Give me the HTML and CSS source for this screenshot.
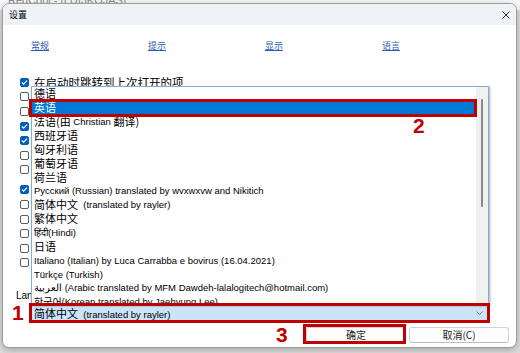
FILE: index.html
```html
<!DOCTYPE html>
<html lang="zh-CN">
<head>
<meta charset="utf-8">
<title>设置</title>
<link rel="stylesheet" href="styles.css">
</head>
<body>
<div class="app-title"><span class="app-title-text">RedCool - [LUI3KOJAS]</span></div>

<div class="dialog">
  <div class="titlebar">
    <span class="title">设置</span>
    <svg class="close" viewBox="0 0 8 8" width="8" height="8"><path d="M0.5 0.5 L7.5 7.5 M7.5 0.5 L0.5 7.5" stroke="#333" stroke-width="1" fill="none"/></svg>
  </div>
  <div class="content">
    <nav class="tabs">
      <a class="tab">常规</a>
      <a class="tab">提示</a>
      <a class="tab">显示</a>
      <a class="tab">语言</a>
    </nav>
    <div class="options">
      <div class="opt"><span class="cb on"><svg viewBox="0 0 9 9" width="9" height="9"><path d="M1.8 4.5 L3.6 6.2 L7.1 2.6" stroke="#fff" stroke-width="1.1" fill="none"/></svg></span><span class="opt-label">在启动时跳转到上次打开的项</span></div>
      <div class="opt"><span class="cb"></span></div>
      <div class="opt"><span class="cb"></span></div>
      <div class="opt"><span class="cb on"><svg viewBox="0 0 9 9" width="9" height="9"><path d="M1.8 4.5 L3.6 6.2 L7.1 2.6" stroke="#fff" stroke-width="1.1" fill="none"/></svg></span></div>
      <div class="opt"><span class="cb on"><svg viewBox="0 0 9 9" width="9" height="9"><path d="M1.8 4.5 L3.6 6.2 L7.1 2.6" stroke="#fff" stroke-width="1.1" fill="none"/></svg></span></div>
      <div class="opt"><span class="cb"></span></div>
      <div class="opt"><span class="cb"></span></div>
      <div class="opt group"><span class="cb on"><svg viewBox="0 0 9 9" width="9" height="9"><path d="M1.8 4.5 L3.6 6.2 L7.1 2.6" stroke="#fff" stroke-width="1.1" fill="none"/></svg></span></div>
      <div class="opt"><span class="cb"></span></div>
      <div class="opt"><span class="cb"></span></div>
      <div class="opt"><span class="cb"></span></div>
      <div class="opt"><span class="cb"></span></div>
      <div class="opt"><span class="cb"></span></div>
    </div>
    <div class="lang-label">Language:</div>
    <div class="combo">
      <span class="combo-text"><span class="zh">简体中文</span>&nbsp; (translated by rayler)</span>
      <svg class="chev" viewBox="0 0 7 4" width="7" height="4"><path d="M0.5 0.5 L3.5 3.5 L6.5 0.5" stroke="#777" stroke-width="1" fill="none"/></svg>
    </div>
    <div class="buttons">
      <button class="btn">确定</button>
      <button class="btn">取消(C)</button>
    </div>
  </div>
</div>

<div class="dropdown">
  <div class="items">
    <div class="item"><span class="zh">德语</span></div>
    <div class="item sel"><span class="zh">英语</span></div>
    <div class="item"><span class="zh">法语(由</span>&nbsp;Christian&nbsp;<span class="zh">翻译)</span></div>
    <div class="item"><span class="zh">西班牙语</span></div>
    <div class="item"><span class="zh">匈牙利语</span></div>
    <div class="item"><span class="zh">葡萄牙语</span></div>
    <div class="item"><span class="zh">荷兰语</span></div>
    <div class="item">Русский (Russian) translated by wvxwxvw and Nikitich</div>
    <div class="item"><span class="zh">简体中文</span>&nbsp; (translated by rayler)</div>
    <div class="item"><span class="zh">繁体中文</span></div>
    <div class="item">हिंदी(Hindi)</div>
    <div class="item"><span class="zh">日语</span></div>
    <div class="item">Italiano (Italian) by Luca Carrabba e bovirus (16.04.2021)</div>
    <div class="item">Türkçe (Turkish)</div>
    <div class="item">العربية (Arabic translated by MFM Dawdeh-lalalogitech@hotmail.com)</div>
    <div class="item"><span class="ko">한국어</span> (Korean translated by Jaehyung Lee)</div>
  </div>
  <div class="scroll"><div class="thumb"></div></div>
</div>

<div class="mark mark-list"></div>
<div class="mark mark-combo"></div>
<div class="mark mark-ok"></div>
<div class="num num-1">1</div>
<div class="num num-2">2</div>
<div class="num num-3">3</div>
</body>
</html>
```

FILE: styles.css
```css
* { box-sizing: border-box; }
html, body { margin: 0; padding: 0; }
body {
  width: 520px;
  height: 353px;
  overflow: hidden;
  position: relative;
  background: #dcdcdc;
  font-family: "Liberation Sans", "Noto Sans CJK SC", sans-serif;
  color: #000;
}

.app-title {
  height: 10px;
  background: #f7f7f7;
  padding-left: 8px;
  overflow: hidden;
}
.app-title-text {
  display: block;
  margin-top: -6px;
  font-size: 11px;
  line-height: 12px;
  color: #8a8a8a;
}

.dialog {
  position: absolute;
  left: 2px;
  top: 3px;
  width: 515px;
  height: 345px;
  background: #fff;
  border: 1px solid #9d9d9d;
  border-radius: 7px;
  box-shadow: 0 2px 6px rgba(0, 0, 0, 0.25);
  overflow: hidden;
  display: flex;
  flex-direction: column;
}

.titlebar {
  height: 21px;
  flex: none;
  background: #eff3f8;
  display: flex;
  align-items: center;
  justify-content: space-between;
  padding: 0 6px;
}
.title {
  font-family: "Noto Sans CJK SC", sans-serif;
  font-size: 9px;
  line-height: 12px;
}
.close { display: block; }

.content {
  flex: 1;
  padding-top: 15px;
  display: flex;
  flex-direction: column;
}

.tabs {
  display: grid;
  grid-template-columns: repeat(4, 117px);
  padding-left: 28px;
  font-family: "Noto Sans CJK SC", sans-serif;
  font-size: 9px;
  line-height: 12px;
}
.tab {
  color: #2b5cb3;
  text-decoration: underline;
  justify-self: start;
}

.options {
  margin-top: 23px;
  padding-left: 17px;
  display: flex;
  flex-direction: column;
}
.opt {
  height: 14.6px;
  display: flex;
  align-items: center;
  gap: 5px;
}
.opt.group { margin-top: 5.4px; }
.cb {
  width: 9px;
  height: 9px;
  flex: none;
  border: 1px solid #5c5c5c;
  border-radius: 2px;
  background: #fff;
  position: relative;
}
.cb.on {
  background: #005fb8;
  border-color: #005fb8;
}
.cb svg {
  position: absolute;
  left: -1px;
  top: -1px;
}
.opt-label {
  font-family: "Noto Sans CJK SC", sans-serif;
  font-size: 11.5px;
  line-height: 14px;
  white-space: nowrap;
}

.lang-label {
  margin-top: 19.6px;
  padding-left: 13px;
  font-size: 10px;
  line-height: 12px;
}

.combo {
  margin: 3.2px 0 0 28px;
  width: 457px;
  height: 16px;
  background: #cce4f7;
  border: 1px solid #9cc3e6;
  display: flex;
  align-items: center;
  justify-content: space-between;
  padding: 0 4px 0 2px;
  font-size: 9.5px;
  white-space: nowrap;
}
.chev { display: block; }

.buttons {
  margin-top: 6px;
  display: flex;
  justify-content: flex-end;
  gap: 3px;
  padding-right: 7px;
}
.btn {
  width: 100px;
  height: 16px;
  padding: 0;
  margin: 0;
  font-family: "Noto Sans CJK SC", sans-serif;
  font-size: 10px;
  line-height: 14px;
  color: #1b1b1b;
  background: #fdfdfd;
  border: 1px solid #d2d2d2;
  border-bottom-color: #bdbdbd;
  border-radius: 3px;
}

.zh {
  font-family: "Noto Sans CJK SC", sans-serif;
  font-size: 11px;
}
.ko {
  font-family: "Noto Sans CJK KR", sans-serif;
  font-size: 10px;
}

.dropdown {
  position: absolute;
  left: 31px;
  top: 86px;
  width: 458px;
  height: 219px;
  background: #fff;
  border: 1px solid #7eaee0;
  box-shadow: 1px 1px 2px rgba(0, 0, 0, 0.35);
  display: flex;
  overflow: hidden;
}
.items {
  flex: 1;
  min-width: 0;
  display: flex;
  flex-direction: column;
}
.item {
  height: 13.87px;
  flex: none;
  display: flex;
  align-items: center;
  padding-left: 2px;
  font-size: 9.5px;
  line-height: 13px;
  white-space: nowrap;
  overflow: hidden;
}
.item.sel {
  background: #0078d7;
  color: #fff;
}
.scroll {
  width: 12px;
  flex: none;
  background: #f0f0f0;
  padding-top: 12px;
  display: flex;
  justify-content: center;
}
.thumb {
  width: 2px;
  height: 108px;
  background: #878787;
  border-radius: 1px;
}

.mark {
  position: absolute;
  border: 3px solid #c00000;
}
.mark-list { left: 29px; top: 99px; width: 448px; height: 18px; }
.mark-combo { left: 29px; top: 303px; width: 461px; height: 20px; }
.mark-ok { left: 303px; top: 324px; width: 103px; height: 20px; }

.num {
  position: absolute;
  font-family: "Liberation Sans", sans-serif;
  font-weight: bold;
  font-size: 21px;
  line-height: 21px;
  color: #c00000;
}
.num-1 { left: 12px; top: 302px; }
.num-2 { left: 413px; top: 115px; }
.num-3 { left: 276px; top: 324px; }
```
